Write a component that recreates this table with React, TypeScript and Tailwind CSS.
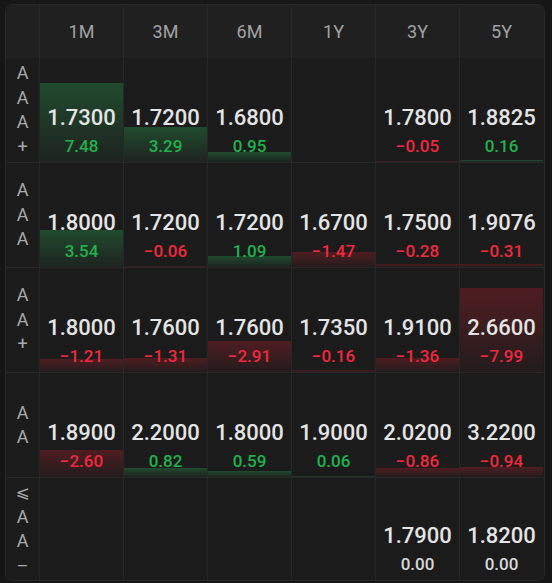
import React from "react";

type Cell = [string, number, string] | null;

const rows: { labels: string[]; h: string; cells: Cell[] }[] = [
  {
    labels: ["A", "A", "A", "+"],
    h: "h-[104px]",
    cells: [
      ["1.7300", 7.48, "7.48"],
      ["1.7200", 3.29, "3.29"],
      ["1.6800", 0.95, "0.95"],
      null,
      ["1.7800", -0.05, "−0.05"],
      ["1.8825", 0.16, "0.16"],
    ],
  },
  {
    labels: ["A", "A", "A"],
    h: "h-[105px]",
    cells: [
      ["1.8000", 3.54, "3.54"],
      ["1.7200", -0.06, "−0.06"],
      ["1.7200", 1.09, "1.09"],
      ["1.6700", -1.47, "−1.47"],
      ["1.7500", -0.28, "−0.28"],
      ["1.9076", -0.31, "−0.31"],
    ],
  },
  {
    labels: ["A", "A", "+"],
    h: "h-[105px]",
    cells: [
      ["1.8000", -1.21, "−1.21"],
      ["1.7600", -1.31, "−1.31"],
      ["1.7600", -2.91, "−2.91"],
      ["1.7350", -0.16, "−0.16"],
      ["1.9100", -1.36, "−1.36"],
      ["2.6600", -7.99, "−7.99"],
    ],
  },
  {
    labels: ["A", "A"],
    h: "h-[105px]",
    cells: [
      ["1.8900", -2.6, "−2.60"],
      ["2.2000", 0.82, "0.82"],
      ["1.8000", 0.59, "0.59"],
      ["1.9000", 0.06, "0.06"],
      ["2.0200", -0.86, "−0.86"],
      ["3.2200", -0.94, "−0.94"],
    ],
  },
  {
    labels: ["⩽", "A", "A", "–"],
    h: "h-[103px]",
    cells: [null, null, null, null, ["1.7900", 0, "0.00"], ["1.8200", 0, "0.00"]],
  },
];

const headers = ["1M", "3M", "6M", "1Y", "3Y", "5Y"];

function DataCell({ cell }: { cell: Cell }) {
  if (!cell) return <div className="relative border-l border-[#272727]" />;
  const [num, v, txt] = cell;
  const hgt = Math.abs(v) * 10.5;
  const pos = v > 0;
  const zero = v === 0;
  return (
    <div className="relative flex flex-col items-center justify-end border-l border-[#272727] pb-[6px]">
      {!zero && (
        <div
          className={
            pos
              ? "absolute bottom-0 left-0 right-0 bg-gradient-to-b from-[#1f4b2e] to-[#1c231f]"
              : "absolute bottom-0 left-0 right-0 bg-gradient-to-b from-[#4f1c21] to-[#231b1c]"
          }
          style={{ height: `${hgt}px` }}
        />
      )}
      <div className="relative mb-[4px] text-[22px] leading-[28px] font-medium text-[#e4e4e4]">{num}</div>
      <div
        className={
          "relative text-[17px] leading-[20px] font-medium " +
          (zero ? "text-[#d8d8d8]" : pos ? "text-[#1fb24e]" : "text-[#f1283d]")
        }
      >
        {txt}
      </div>
    </div>
  );
}

export default function App() {
  return (
    <div
      className="min-h-[583px] w-[552px] bg-[#161616] pt-[4px] pl-[5px]"
      style={{ fontFamily: "Roboto, 'DejaVu Sans', sans-serif" }}
    >
      <div className="w-[540px] overflow-hidden rounded-[7px] border border-[#282828] bg-[#1b1b1b]">
        <div className="grid h-[53px] grid-cols-[33px_repeat(6,84px)] bg-[#202020]">
          <div />
          {headers.map((h) => (
            <div
              key={h}
              className="flex items-center justify-center border-l border-[#282828] text-[18px] text-[#a2a2a2]"
            >
              {h}
            </div>
          ))}
        </div>
        {rows.map((r, i) => (
          <div
            key={i}
            className={
              "grid grid-cols-[33px_repeat(6,84px)] " + r.h + (i > 0 ? " border-t border-[#272727]" : "")
            }
          >
            <div className="flex flex-col items-center justify-center text-[18px] leading-[24.5px] text-[#a9a9a9]">
              {r.labels.map((l, j) => (
                <span key={j} className={l === "⩽" ? "font-['DejaVu_Sans'] text-[17px]" : ""}>
                  {l}
                </span>
              ))}
            </div>
            {r.cells.map((c, j) => (
              <DataCell key={j} cell={c} />
            ))}
          </div>
        ))}
      </div>
    </div>
  );
}
